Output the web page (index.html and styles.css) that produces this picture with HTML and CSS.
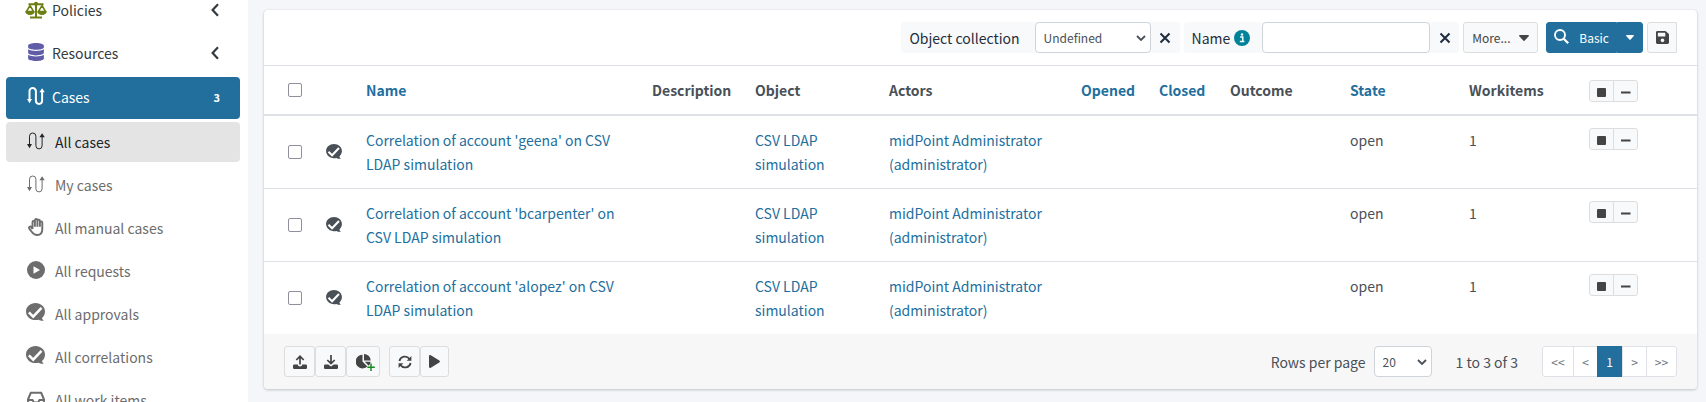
FILE: index.html
```
<!DOCTYPE html>
<html lang="en">
<head>
<meta charset="utf-8">
<title>All cases</title>
<link rel="stylesheet" href="styles.css">
</head>
<body>
<svg class="defs" aria-hidden="true">
  <symbol id="cases" viewBox="0 0 18 18"><path d="M2.5 13V4.2a3.2 3.2 0 0 1 6.4 0v9.6a3.1 3.1 0 0 0 6.2 0V5" fill="none" stroke="currentColor"/><path d="M0 12h5l-2.5 4.200zM12.400 5.200h5.400L15.100 1.200z" fill="currentColor"/></symbol>
  <symbol id="approve" viewBox="0 0 19 18"><path d="M9.500 0C14.800 0 19 3.600 19 8.500c0 2.700-1.200 4.900-3 6.400.2 1.200.8 2 1.800 2.600-2 .5-3.800.2-5.300-.8-1 .3-2 .4-3 .4C4.200 17.100 0 13.400 0 8.500S4.200 0 9.500 0z" fill="currentColor"/><path d="M2.900 9.400l4.300 4.200 8.300-8.800" fill="none" stroke="#fff" stroke-width="2.500"/></symbol>
  <symbol id="x" viewBox="0 0 12 12"><path d="M1.500 1.500l9 9M10.500 1.500l-9 9" stroke="currentColor" stroke-width="2" fill="none"/></symbol>
  <symbol id="down" viewBox="0 0 10 6"><path d="M1 1l4 4 4-4" stroke="currentColor" stroke-width="1.800" fill="none"/></symbol>
  <symbol id="left" viewBox="0 0 8 14"><path d="M7 1.200L1.600 7 7 12.800" stroke="currentColor" stroke-width="2.200" fill="none"/></symbol>
  <symbol id="caret" viewBox="0 0 10 6"><path d="M.8 0h8.400c.7 0 1 .8.500 1.200L5.500 5.700a.7.7 0 0 1-1 0L.3 1.200C-.2.800.1 0 .8 0z" fill="currentColor"/></symbol>
  <symbol id="stop" viewBox="0 0 9 9"><rect width="9" height="9" rx="1" fill="currentColor"/></symbol>
  <symbol id="minus" viewBox="0 0 10 9"><path d="M0 4.500h9.500" stroke="currentColor" stroke-width="1.900"/></symbol>
</svg>
<div class="app">
  <nav class="sidebar" aria-label="Main menu">
    <ul class="menu">
      <li><a class="item" href="#"><svg class="ico policy" viewBox="0 0 22 18"><path d="M3.500 3.200h15M11 1v15" stroke="currentColor" stroke-width="2"/><circle cx="11" cy="2.800" r="2" fill="currentColor"/><path d="M5 16.500h12" stroke="currentColor" stroke-width="2"/><path d="M1.400 10.500L5 4.500l3.600 6zM13.400 10.500l3.600-6 3.600 6z" fill="none" stroke="currentColor" stroke-width="1.500"/><path d="M.3 10.500h9.400a4.700 3.500 0 0 1-9.400 0zM12.300 10.500h9.400a4.700 3.500 0 0 1-9.400 0z" fill="currentColor"/></svg><span>Policies</span><svg class="chev"><use href="#left"/></svg></a></li>
      <li><a class="item" href="#"><svg class="ico database" viewBox="0 0 448 512"><path fill="currentColor" d="M448 73.143v45.714C448 159.143 347.667 192 224 192S0 159.143 0 118.857V73.143C0 32.857 100.333 0 224 0s224 32.857 224 73.143zM448 176v102.857C448 319.143 347.667 352 224 352S0 319.143 0 278.857V176c48.125 33.143 136.208 48.572 224 48.572S399.874 209.143 448 176zm0 160v102.857C448 479.143 347.667 512 224 512S0 479.143 0 438.857V336c48.125 33.143 136.208 48.572 224 48.572S399.874 369.143 448 336z"/></svg><span>Resources</span><svg class="chev"><use href="#left"/></svg></a></li>
      <li><a class="item active" href="#"><svg class="ico cases bold"><use href="#cases"/></svg><span>Cases</span><b class="count">3</b></a>
        <ul class="submenu">
          <li><a class="item sub current" href="#"><svg class="ico cases"><use href="#cases"/></svg><span>All cases</span></a></li>
          <li><a class="item sub" href="#"><svg class="ico cases"><use href="#cases"/></svg><span>My cases</span></a></li>
          <li><a class="item sub" href="#"><svg class="ico" viewBox="0 0 18 18"><path d="M4.500 11V4.300c0-1.800 2.400-1.800 2.400 0V2.500c0-2 2.500-2 2.500 0V3c0-1.900 2.500-1.900 2.500 0v1.700c0-1.800 2.400-1.800 2.400 0v6.600c0 3.300-1.800 5.700-5 5.700-2.600 0-4-1-5.400-3L1.200 10.600C.3 9 2.300 7.900 3.300 9.200L4.500 11M6.900 4.300v4.500M9.400 3v5.800M11.900 4.500v4.300" transform="translate(1 0)" fill="none" stroke="currentColor" stroke-width="1.900" stroke-linejoin="round"/></svg><span>All manual cases</span></a></li>
          <li><a class="item sub" href="#"><svg class="ico" viewBox="0 0 18 18"><circle cx="9" cy="9" r="9" fill="currentColor"/><path d="M6.500 5.300v7.400L13 9z" fill="#fff"/></svg><span>All requests</span></a></li>
          <li><a class="item sub" href="#"><svg class="ico wide"><use href="#approve"/></svg><span>All approvals</span></a></li>
          <li><a class="item sub" href="#"><svg class="ico wide"><use href="#approve"/></svg><span>All correlations</span></a></li>
          <li><a class="item sub" href="#"><svg class="ico" viewBox="0 0 18 18"><path d="M1 9.500L3.800 2.800h10.400L17 9.500v5a1.500 1.500 0 0 1-1.500 1.500h-13A1.500 1.500 0 0 1 1 14.500zM1 10h4.500L7 12.500h4L12.500 10H17" fill="none" stroke="currentColor" stroke-width="2"/></svg><span>All work items</span></a></li>
        </ul>
      </li>
    </ul>
  </nav>

  <main class="content">
    <section class="card">
      <form class="toolbar">
        <div class="group">
          <label for="collection">Object collection</label>
          <span class="select collection"><select id="collection"><option>Undefined</option></select><svg><use href="#down"/></svg></span>
          <button class="remove" type="button" aria-label="Remove object collection"><svg><use href="#x"/></svg></button>
        </div>
        <div class="group">
          <label for="name">Name</label>
          <svg class="info" viewBox="0 0 16 16"><circle cx="8" cy="8" r="8" fill="#00829b"/><path d="M6.200 7h2.600v4.500M5.800 11.500h4.500" stroke="#fff" stroke-width="1.400" fill="none"/><circle cx="8" cy="4.500" r="1.200" fill="#fff"/></svg>
          <input id="name" class="text" type="text">
          <button class="remove" type="button" aria-label="Remove name"><svg><use href="#x"/></svg></button>
        </div>
        <button class="btn more" type="button">More...<svg class="caret"><use href="#caret"/></svg></button>
        <div class="search">
          <button class="btn primary" type="button"><svg viewBox="0 0 15 15"><circle cx="6" cy="6" r="5" fill="none" stroke="currentColor" stroke-width="1.900"/><path d="M9.700 9.700l4.500 4.500" stroke="currentColor" stroke-width="2.200"/></svg>Basic</button>
          <button class="btn primary toggle" type="button" aria-label="Search mode"><svg><use href="#caret"/></svg></button>
        </div>
        <button class="btn save" type="button" aria-label="Save filter"><svg viewBox="0 32 448 448"><path fill="currentColor" d="M433.941 129.941l-83.882-83.882A48 48 0 0 0 316.118 32H48C21.490 32 0 53.490 0 80v352c0 26.510 21.490 48 48 48h352c26.510 0 48-21.490 48-48V163.882a48 48 0 0 0-14.059-33.941zM224 416c-35.346 0-64-28.654-64-64 0-35.346 28.654-64 64-64s64 28.654 64 64c0 35.346-28.654 64-64 64zm96-304.520V212c0 6.627-5.373 12-12 12H76c-6.627 0-12-5.373-12-12V108c0-6.627 5.373-12 12-12h228.520c3.183 0 6.235 1.264 8.485 3.515l3.480 3.480A11.996 11.996 0 0 1 320 111.480z"/></svg></button>
      </form>

      <table class="grid">
        <colgroup><col class="c-check"><col class="c-icon"><col><col class="c-desc"><col class="c-object"><col class="c-actors"><col class="c-opened"><col class="c-closed"><col class="c-wide"><col class="c-state"><col class="c-wide"><col class="c-wide"></colgroup>
        <thead>
          <tr>
            <th class="check"><input type="checkbox" aria-label="Select all"></th><th></th>
            <th><a href="#">Name</a></th><th>Description</th><th>Object</th><th>Actors</th>
            <th><a href="#">Opened</a></th><th><a href="#">Closed</a></th><th>Outcome</th><th><a href="#">State</a></th><th>Workitems</th>
            <th><div class="actions"><button type="button" aria-label="Stop"><svg class="sq"><use href="#stop"/></svg></button><button type="button" aria-label="Remove"><svg><use href="#minus"/></svg></button></div></th>
          </tr>
        </thead>
        <tbody>
          <tr>
            <td class="check"><input type="checkbox" aria-label="Select geena"></td>
            <td class="kind"><svg><use href="#approve"/></svg></td>
            <td><a href="#">Correlation of account 'geena' on CSV LDAP simulation</a></td><td></td>
            <td><a href="#">CSV LDAP simulation</a></td><td><a href="#">midPoint Administrator (administrator)</a></td>
            <td></td><td></td><td></td><td>open</td><td>1</td>
            <td><div class="actions"><button type="button" aria-label="Stop"><svg class="sq"><use href="#stop"/></svg></button><button type="button" aria-label="Remove"><svg><use href="#minus"/></svg></button></div></td>
          </tr>
          <tr>
            <td class="check"><input type="checkbox" aria-label="Select bcarpenter"></td>
            <td class="kind"><svg><use href="#approve"/></svg></td>
            <td><a href="#">Correlation of account 'bcarpenter' on CSV LDAP simulation</a></td><td></td>
            <td><a href="#">CSV LDAP simulation</a></td><td><a href="#">midPoint Administrator (administrator)</a></td>
            <td></td><td></td><td></td><td>open</td><td>1</td>
            <td><div class="actions"><button type="button" aria-label="Stop"><svg class="sq"><use href="#stop"/></svg></button><button type="button" aria-label="Remove"><svg><use href="#minus"/></svg></button></div></td>
          </tr>
          <tr>
            <td class="check"><input type="checkbox" aria-label="Select alopez"></td>
            <td class="kind"><svg><use href="#approve"/></svg></td>
            <td><a href="#">Correlation of account 'alopez' on CSV LDAP simulation</a></td><td></td>
            <td><a href="#">CSV LDAP simulation</a></td><td><a href="#">midPoint Administrator (administrator)</a></td>
            <td></td><td></td><td></td><td>open</td><td>1</td>
            <td><div class="actions"><button type="button" aria-label="Stop"><svg class="sq"><use href="#stop"/></svg></button><button type="button" aria-label="Remove"><svg><use href="#minus"/></svg></button></div></td>
          </tr>
        </tbody>
      </table>

      <footer class="foot">
        <div class="tools">
          <button class="btn tool" type="button" aria-label="Export"><svg viewBox="0 0 14 14"><path d="M7 9.500V1.500M3.300 5L7 1.300 10.700 5" fill="none" stroke="currentColor" stroke-width="1.700"/><path d="M1.200 9.500h3.600c0 2.600 4.400 2.600 4.400 0h3.600a1.200 1.200 0 0 1 1.200 1.200v2A1.200 1.200 0 0 1 12.800 14H1.200A1.200 1.200 0 0 1 0 12.700v-2a1.200 1.200 0 0 1 1.200-1.200z" fill="currentColor"/></svg></button>
          <button class="btn tool" type="button" aria-label="Import"><svg viewBox="0 0 14 14"><path d="M7 0v8M3.300 5L7 8.600 10.700 5" fill="none" stroke="currentColor" stroke-width="1.700"/><path d="M1.200 9.500h3L7 11.600l2.800-2.100h3a1.200 1.200 0 0 1 1.200 1.200v2A1.200 1.200 0 0 1 12.800 14H1.200A1.200 1.200 0 0 1 0 12.700v-2a1.200 1.200 0 0 1 1.200-1.200z" fill="currentColor"/></svg></button>
          <button class="btn tool report" type="button" aria-label="Create report"><svg viewBox="0 0 19 17"><path d="M6.500.8v6.700l4.800 4.900A6.800 6.800 0 1 1 6.500.8z" fill="currentColor"/><path d="M8 0a6.600 6.600 0 0 1 6.600 6.400H8z" fill="currentColor"/><path d="M8.800 7.700h5.800a6.600 6.600 0 0 1-1.900 4z" fill="currentColor"/><path d="M15 9.500v7.500M11.300 13.200h7.500" stroke="#168c1e" stroke-width="1.500"/></svg></button>
          <button class="btn tool refresh" type="button" aria-label="Refresh"><svg viewBox="0 0 14 14"><path d="M1.400 6A5.600 5.600 0 0 1 11.500 4M12.600 8A5.600 5.600 0 0 1 2.500 10" fill="none" stroke="currentColor" stroke-width="1.800"/><path d="M13.400 1v4.700H8.700zM.6 13V8.300h4.700z" fill="currentColor"/></svg></button>
          <button class="btn tool run" type="button" aria-label="Run"><svg class="play" viewBox="0 0 11 13"><path d="M0 1.200C0 .2 1 -.2 1.800.300l8.500 5.300c.8.500.8 1.300 0 1.800l-8.500 5.300c-.8.500-1.800.1-1.800-.9z" fill="currentColor"/></svg></button>
        </div>
        <div class="paging">
          <label for="rows">Rows per page</label>
          <span class="select rows"><select id="rows"><option>20</option></select><svg><use href="#down"/></svg></span>
          <span class="summary">1 to 3 of 3</span>
          <div class="pager"><a class="end" href="#">&lt;&lt;</a><a href="#">&lt;</a><a class="on" href="#">1</a><a href="#">&gt;</a><a class="end" href="#">&gt;&gt;</a></div>
        </div>
      </footer>
    </section>
  </main>
</div>
</body>
</html>
```
FILE: styles.css
```
* { box-sizing: border-box; }
body {
  margin: 0;
  background: #f4f6f9;
  color: #495057;
  font: 14px/24px "Noto Sans CJK SC", "Open Sans", sans-serif;
}
a { color: #226f9e; text-decoration: none; }
ul { margin: 0; padding: 0; list-style: none; }
button, select, input { margin: 0; font: inherit; color: inherit; }
button { cursor: pointer; }
svg { display: block; flex: none; }
.defs { position: absolute; width: 0; height: 0; }

.app { display: flex; height: 100vh; overflow: hidden; }

/* Menu, scrolled so that its first entry is partly hidden */
.sidebar { flex: none; width: 248px; padding: 0 8px 0 6px; background: #fff; overflow: hidden; }
.menu { margin-top: -9px; }
.item {
  display: flex;
  align-items: center;
  height: 40px;
  margin-bottom: 3px;
  padding: 0 20px 2px;
  border-radius: 4px;
  color: #343a40;
}
.item.active { height: 42px; padding-bottom: 3px; background: #226f9e; color: #fff; }
.item.sub { padding-bottom: 0; color: #6d6d6d; }
.item.sub span { margin-left: 3px; }
.item.current { background: #e4e4e4; color: #212529; }
.item span { flex: 1; }
.ico { width: 18px; height: 18px; margin: 0 7px 2px 1px; }
.cases { stroke-width: 1px; }
.cases.bold { stroke-width: 2px; }
.wide { width: 19px; margin: 0 7px 4px 0; }
.policy { width: 22px; margin: 0 5px 0 -1px; color: #6b7f12; }
.database { width: 16px; margin: 0 8px 2px 2px; color: #605ca8; }
.chev { width: 8px; height: 14px; margin-right: 1px; }
.count { font-size: 11px; }

.content { flex: 1; min-width: 0; padding: 10px 9px 10px 16px; }
.card { background: #fff; border-radius: 4px; box-shadow: 0 0 1px rgba(0,0,0,.13), 0 1px 3px rgba(0,0,0,.2); overflow: hidden; }

.toolbar { display: flex; justify-content: flex-end; gap: 4px; padding: 12px 20px; }
.group { display: flex; align-items: center; height: 31px; padding-left: 8px; background: #f8f9fa; border-radius: 3px; color: #1f2d3d; }
.group .select { margin-left: 15px; }
.select { position: relative; display: block; }
.select select {
  width: 100%;
  height: 31px;
  padding: 0 8px;
  appearance: none;
  background: #fff;
  border: 1px solid #ced4da;
  border-radius: 4px;
  color: #495057;
  font-size: 12px;
}
.select svg { position: absolute; right: 5px; top: 13px; width: 10px; height: 6px; color: #495057; pointer-events: none; }
.collection { width: 116px; }
.remove { display: flex; align-items: center; justify-content: center; width: 29px; height: 31px; padding: 0; border: 0; background: none; }
.remove svg { width: 12px; height: 12px; }
.info { width: 16px; height: 16px; margin: 0 12px 0 4px; }
.text { width: 168px; height: 31px; padding: 0 8px; border: 1px solid #ced4da; border-radius: 4px; background: #fff; }

.btn { display: flex; align-items: center; justify-content: center; height: 31px; padding: 0 8px; border: 1px solid #ddd; border-radius: 3px; background: #f8f9fa; color: #444; font-size: 12px; }
.more { width: 75px; justify-content: space-between; }
.caret { width: 10px; height: 6px; }
.search { display: flex; margin-left: 4px; }
.primary { gap: 10px; padding: 0 7px; border-color: #226f9e; border-radius: 3px 0 0 3px; background: #226f9e; color: #fff; }
.primary svg { width: 15px; height: 15px; margin-bottom: 2px; }
.toggle { width: 26px; padding: 0; border-radius: 0 3px 3px 0; }
.toggle svg { width: 8px; height: 5px; margin: 0; }
.save { width: 30px; border-radius: 3px 0 0 3px; }
.save svg { width: 13px; height: 13px; }

.grid { width: 100%; table-layout: fixed; border-collapse: separate; border-spacing: 0; }
.grid th, .grid td { padding: 12px; border-top: 1px solid #dee2e6; text-align: left; vertical-align: top; }
.grid th { border-bottom: 2px solid #dee2e6; font-weight: 700; }
.grid tbody tr:first-child td { border-top: 0; }
.grid .check { padding-left: 24px; padding-right: 0; vertical-align: middle; }
.grid .kind { vertical-align: middle; }
.kind svg { width: 16px; height: 15px; margin-bottom: 2px; }
.check input { display: block; width: 14px; height: 14px; appearance: none; border: 1px solid #8f8f9d; border-radius: 2px; background: #fff; }
.c-check { width: 50px; }
.c-icon { width: 40px; }
.c-desc { width: 103px; }
.c-object { width: 134px; }
.c-actors { width: 192px; }
.c-opened { width: 78px; }
.c-closed { width: 71px; }
.c-wide { width: 120px; }
.c-state { width: 119px; }
.actions { display: flex; height: 22px; }
th .actions { margin-top: 2px; }
.actions button { display: flex; align-items: center; justify-content: center; width: 25px; padding: 3px 0 0; border: 1px solid #ddd; border-radius: 3px 0 0 3px; background: #f8f9fa; color: #444; }
.actions button + button { margin-left: -1px; border-radius: 0 3px 3px 0; }
.actions svg { width: 10px; height: 9px; }
.actions .sq { width: 9px; }

.foot { display: flex; align-items: center; justify-content: space-between; padding: 12px 20px; background: #f7f7f7; }
.tools, .paging { display: flex; align-items: center; }
.tool { width: 31px; padding: 0; }
.tool svg { width: 14px; height: 14px; }
.tool.report { width: 34px; }
.report svg { width: 19px; height: 17px; margin: 2px 0 0 4px; }
.refresh { margin-left: 9px; }
.tool.run { width: 29px; }
.tool .play { width: 11px; height: 13px; }
.rows { width: 58px; margin-left: 8px; }
.summary { margin: 0 24px; }
.pager { display: flex; height: 31px; border: 1px solid #dee2e6; border-radius: 3px; background: #fff; font-size: 12px; line-height: 29px; text-align: center; }
.pager a { width: 24px; color: #6c757d; }
.pager a + a { border-left: 1px solid #dee2e6; }
.pager .end { width: 30px; }
.pager .on { width: 25px; margin: -1px 0; border: 0; background: #226f9e; color: #fff; line-height: 31px; }
```
